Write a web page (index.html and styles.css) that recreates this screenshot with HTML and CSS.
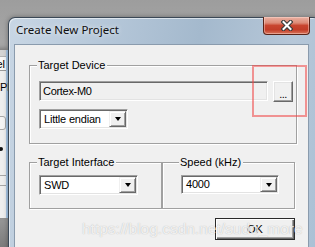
FILE: index.html
```html
<!DOCTYPE html>
<html>
<head>
<meta charset="utf-8">
<link rel="stylesheet" href="styles.css">
</head>
<body>
<div class="bgwin">
  <div class="bg-head"></div>
  <div class="bg-tab">Panel</div>
  <div class="bg-text">Please</div>
  <div class="bg-btn"></div>
  <div class="bg-radio"></div>
  <div class="bg-line"></div>
  <div class="bg-line l2"></div>
</div>
<div class="dialog">
  <div class="titlebar">
    <span class="title">Create New Project</span>
    <div class="close">
      <svg width="12" height="11" viewBox="0 0 12 11">
        <path d="M2.5 2 L9.5 9 M9.5 2 L2.5 9" stroke="#3a3a3a" stroke-width="4.2" stroke-linecap="square" fill="none"/>
        <path d="M2.5 2 L9.5 9 M9.5 2 L2.5 9" stroke="#ffffff" stroke-width="2" stroke-linecap="square" fill="none"/>
      </svg>
    </div>
  </div>
  <div class="client">
    <fieldset class="group g1">
      <legend>Target Device</legend>
      <div class="row">
        <div class="field">Cortex-M0</div>
        <button class="btn btn-dots">...</button>
      </div>
      <div class="combo w-endian"><span class="combo-text">Little endian</span><span class="combo-arrow"></span></div>
    </fieldset>
    <div class="grouprow">
      <fieldset class="group g2">
        <legend>Target Interface</legend>
        <div class="combo w-swd"><span class="combo-text">SWD</span><span class="combo-arrow"></span></div>
      </fieldset>
      <fieldset class="group g3">
        <legend>Speed (kHz)</legend>
        <div class="combo w-speed"><span class="combo-text">4000</span><span class="combo-arrow"></span></div>
      </fieldset>
    </div>
    <div class="actions">
      <button class="btn btn-ok">OK</button>
    </div>
  </div>
</div>
<div class="annot"></div>
<div class="watermark">https://blog.csdn.net/sudo_more</div>
</body>
</html>
```
FILE: styles.css
```css
* { box-sizing: border-box; }
html, body { margin: 0; padding: 0; }
body {
  width: 315px;
  height: 247px;
  overflow: hidden;
  position: relative;
  background: linear-gradient(180deg, #9d9d9d 0px, #a6a6a6 40px, #a8a8a8 200px, #7c7c7c 247px);
  font-family: "Liberation Sans", Arial, sans-serif;
  font-size: 11px;
  color: #000;
}

/* window behind the dialog */
.bgwin {
  position: absolute;
  left: -62px;
  top: 50px;
  width: 70px;
  height: 168px;
  background: #eeeeee;
  border-right: 2px solid #a9c8e8;
  box-shadow: 0 -2px 4px rgba(0,0,0,0.25);
}
.bg-head { height: 7px; background: #d4d4d4; border-bottom: 1px solid #b4b4b4; }
.bg-tab {
  height: 14px;
  background: #f7f7f7;
  border-bottom: 1px solid #9a9a9a;
  text-align: right;
  padding-right: 1px;
  line-height: 14px;
  font-size: 11px;
}
.bg-text { margin-top: 10px; text-align: left; padding-left: 62px; white-space: nowrap; line-height: 13px; }
.bg-btn { margin: 22px 0 0 40px; height: 14px; border: 1px solid #a8a8a8; border-radius: 3px; background: #f4f4f4; }
.bg-radio { margin: 17px 0 0 61px; width: 4px; height: 4px; border-radius: 50%; background: #111; }
.bg-line { margin-top: 24px; height: 1px; background: #a6a6a6; }
.bg-line.l2 { margin-top: 9px; }

/* dialog window */
.dialog {
  position: absolute;
  left: 8px;
  top: 17px;
  width: 312px;
  height: 240px;
  border: 1px solid #3b4856;
  border-bottom: none;
  border-radius: 7px 7px 0 0;
  background: linear-gradient(100deg, #c8d6e4 0%, #b4c6d8 30%, #a4b9cd 55%, #b6c7d8 82%, #aac0d5 100%);
  box-shadow: inset 1px 1px 0 rgba(255,255,255,0.55), 0 0 5px rgba(0,0,0,0.35);
  display: flex;
  flex-direction: column;
}
.titlebar {
  flex: none;
  height: 26px;
  display: flex;
  padding: 0 9px 0 7px;
}
.title {
  font-family: "Noto Sans", "Open Sans", sans-serif;
  font-size: 11.5px;
  line-height: 16px;
  padding-top: 4px;
  color: #101010;
  text-shadow: 0 0 5px rgba(255,255,255,0.85);
}
.close {
  margin-left: auto;
  margin-top: -1px;
  width: 47px;
  height: 18px;
  border: 1px solid #5a2418;
  border-top: none;
  border-radius: 0 0 4px 4px;
  background: linear-gradient(180deg, #eab2a4 0%, #dd8a76 35%, #c8452f 50%, #c23d28 75%, #d9755b 100%);
  box-shadow: inset 0 0 0 1px rgba(255,220,210,0.45);
  display: flex;
  align-items: center;
  justify-content: center;
}
.close svg { display: block; margin-top: 0px; }

.client {
  flex: 1;
  margin: 0 10px 0 5px;
  background: #f0f0f0;
  border: 1px solid #8a9bad;
  border-bottom: none;
  padding: 14px 11px 0 14px;
}

/* group boxes */
.group {
  margin: 0;
  min-width: 0;
  border: 1px solid #a0a0a0;
  box-shadow: inset 1px 1px 0 #ffffff, 1px 1px 0 #ffffff;
}
.group legend {
  padding: 0 2px 0 1px;
  margin-left: -2px;
  line-height: 13px;
  font-size: 11px;
  background: #f0f0f0;
}
.g1 { padding: 9px 3px 14px 9px; }
.row { display: flex; gap: 5px; align-items: flex-start; }
.grouprow {
  margin-top: 12px;
  display: grid;
  grid-template-columns: 133px 133px;
}
.g2 { padding: 6px 3px 13px 9px; }
.g3 { padding: 6px 3px 13px 18px; }

/* controls */
.field {
  flex: 1;
  height: 20px;
  background: #f0f0f0;
  border: 1px solid;
  border-color: #a0a0a0 #ffffff #ffffff #a0a0a0;
  box-shadow: inset 1px 1px 0 #696969, inset -1px -1px 0 #e3e3e3;
  padding: 0 3px;
  line-height: 19px;
  letter-spacing: -0.3px;
  white-space: nowrap;
}
.btn {
  appearance: none;
  margin: 0;
  font-family: "Liberation Sans", Arial, sans-serif;
  font-size: 11px;
  color: #000;
  background: #f0f0f0;
  border: 1px solid;
  border-color: #ffffff #696969 #696969 #ffffff;
  box-shadow: inset -1px -1px 0 #a0a0a0, inset 1px 1px 0 #e3e3e3;
  padding: 0;
}
.btn-dots {
  flex: none;
  width: 20px;
  height: 21px;
  line-height: 21px;
  padding-top: 2px;
  letter-spacing: -0.5px;
}
.combo {
  display: flex;
  height: 20px;
  background: #ffffff;
  border: 1px solid;
  border-color: #a0a0a0 #ffffff #ffffff #a0a0a0;
  box-shadow: inset 1px 1px 0 #696969, inset -1px -1px 0 #e3e3e3;
  padding: 1px;
}
.w-endian { width: 89px; margin-top: 7px; }
.w-swd { width: 99px; }
.w-speed { width: 98px; height: 19px; }
.combo-text {
  flex: 1;
  padding-left: 3px;
  line-height: 16px;
  letter-spacing: -0.2px;
  white-space: nowrap;
  overflow: hidden;
}
.w-speed .combo-text { line-height: 15px; }
.combo-arrow {
  flex: none;
  width: 17px;
  background: #f0f0f0;
  border: 1px solid;
  border-color: #f0f0f0 #696969 #696969 #f0f0f0;
  box-shadow: inset 1px 1px 0 #ffffff, inset -1px -1px 0 #a0a0a0;
  display: flex;
  align-items: center;
  justify-content: center;
}
.combo-arrow::after {
  content: "";
  width: 0;
  height: 0;
  border-left: 3.5px solid transparent;
  border-right: 3.5px solid transparent;
  border-top: 4px solid #000;
}

.actions {
  display: flex;
  justify-content: flex-end;
  margin-top: 9px;
  padding-right: 2px;
}
.btn-ok {
  width: 80px;
  height: 22px;
  border: 1px solid #2a2a2a;
  box-shadow: inset 1px 1px 0 #ffffff, inset -1px -1px 0 #696969, inset -2px -2px 0 #a0a0a0;
  line-height: 20px;
}

/* overlays */
.annot {
  position: absolute;
  left: 252px;
  top: 65px;
  width: 55px;
  height: 52px;
  border: 2px solid rgba(240, 70, 70, 0.55);
}
.watermark {
  position: absolute;
  left: 82px;
  top: 220px;
  font-family: "Liberation Sans", Arial, sans-serif;
  font-size: 15.5px;
  line-height: 18px;
  color: rgba(255,255,255,0.8);
  text-shadow: 0 0 1px rgba(120,120,120,0.55);
  white-space: nowrap;
}
```
